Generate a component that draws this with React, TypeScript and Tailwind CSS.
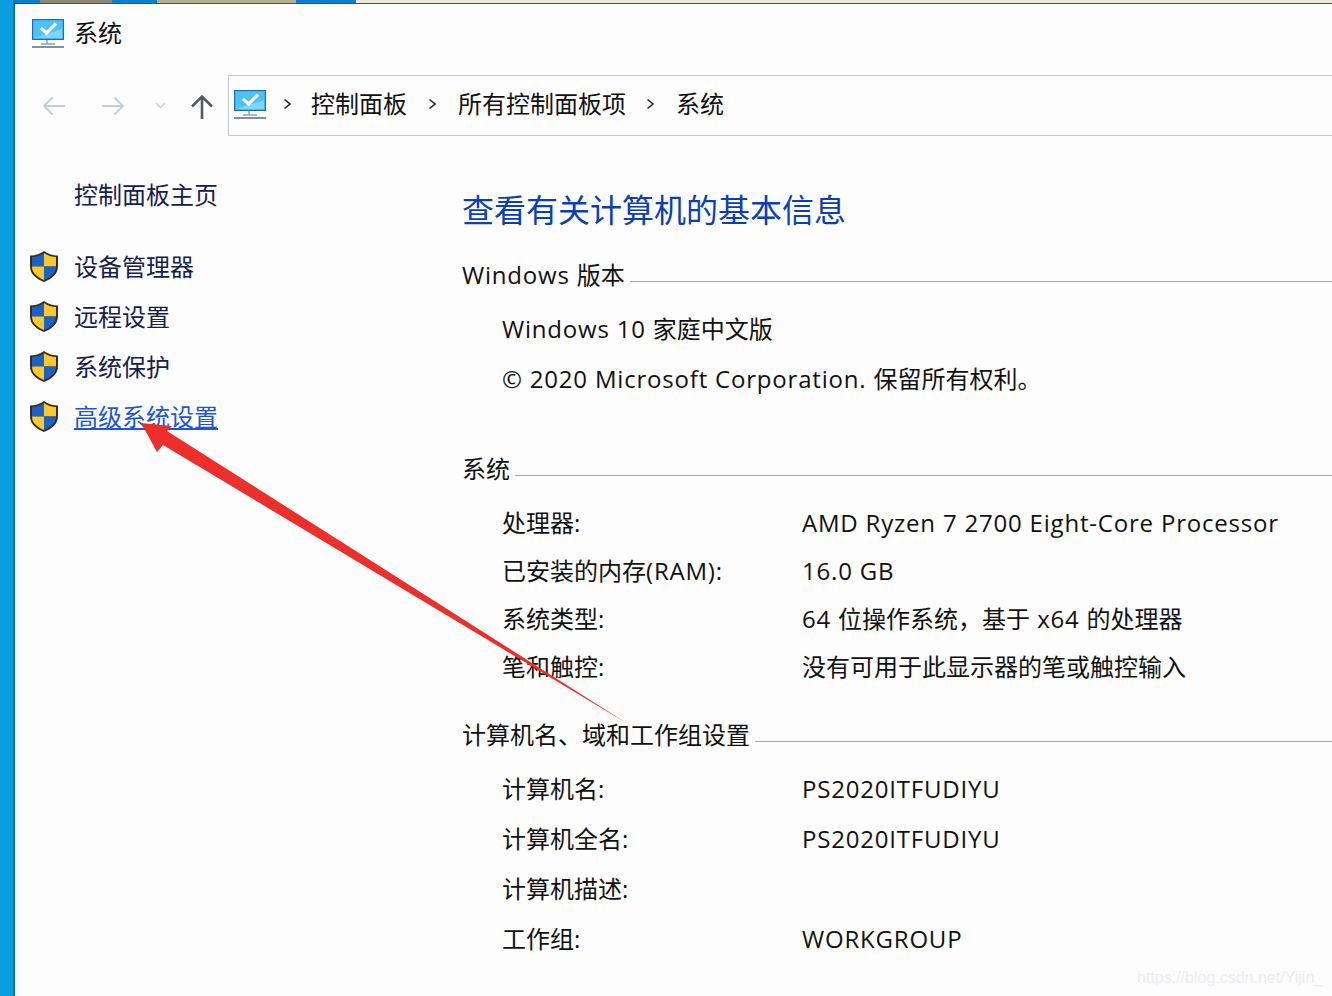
import React from "react";

const fontStack = "font-['Open_Sans','Noto_Sans_CJK_SC',sans-serif]";

function MonitorIcon({ className }: { className?: string }) {
  return (
    <svg viewBox="0 0 32 29" className={className}>
      <rect x="0.5" y="0.5" width="31" height="20" fill="#3fb4f5" stroke="#1f6fae" />
      <rect x="2" y="2" width="28" height="17" fill="#4cc1fa" />
      <path d="M2 19 L30 19 L30 10 Z" fill="#7fd6fc" />
      <path d="M9 9 L14.5 14 L24 4.5" fill="none" stroke="#ffffff" strokeWidth="3.2" />
      <path d="M15 21 V24.5 M9 25 H23" stroke="#8fa3b3" strokeWidth="1.5" fill="none" />
      <path d="M0 28 H32" stroke="#5a6a78" strokeWidth="1.5" fill="none" />
    </svg>
  );
}

function ShieldIcon() {
  return (
    <svg viewBox="0 0 28 31" className="w-[28px] h-[31px] shrink-0 -mt-[2px]">
      <path d="M14 0 C10 3 4.5 4.5 0 4.5 V15 C0 23.5 6.5 28 14 31 C21.5 28 28 23.5 28 15 V4.5 C23.5 4.5 18 3 14 0 Z" fill="#3a2a1c" />
      <path d="M14 2 C10.5 4.5 6 6 2 6 V15.5 H14 Z" fill="#1b62c8" />
      <path d="M14 2 C17.5 4.5 22 6 26 6 V15.5 H14 Z" fill="#fbc92c" />
      <path d="M2 15.5 H14 V29 C7.5 26.2 2 22.5 2 15.5 Z" fill="#fbc92c" />
      <path d="M26 15.5 H14 V29 C20.5 26.2 26 22.5 26 15.5 Z" fill="#1b62c8" />
    </svg>
  );
}

function Chevron() {
  return (
    <svg viewBox="0 0 9 12" className="w-[9px] h-[12px] shrink-0">
      <path d="M1.5 1.5 L7 6 L1.5 10.5" fill="none" stroke="#222222" strokeWidth="1.6" />
    </svg>
  );
}

function Arrow({ flip }: { flip?: boolean }) {
  return (
    <svg viewBox="0 0 24 20" className={`w-[24px] h-[20px] shrink-0 ${flip ? "-scale-x-100" : ""}`}>
      <path d="M23 10 H2 M10.5 1.5 L2 10 L10.5 18.5" fill="none" stroke="#c5ccd5" strokeWidth="1.8" />
    </svg>
  );
}

// latin runs sit wider in the reference than Open Sans sets them
function Spaced({ text }: { text: string }) {
  const parts = text.split(/([A-Za-z0-9©.()\- ]+)/).filter(Boolean);
  return (
    <>
      {parts.map((part, i) =>
        /^[A-Za-z0-9©.()\- ]+$/.test(part) ? (
          <span key={i} className="tracking-[0.8px]">
            {part}
          </span>
        ) : (
          <span key={i}>{part}</span>
        ),
      )}
    </>
  );
}

function SectionTitle({ text, mt }: { text: string; mt: string }) {
  return (
    <div className={`flex items-center gap-[5px] h-[32px] ${mt}`}>
      <span className="text-[24px] leading-[32px] text-[#111111] whitespace-nowrap">
        <Spaced text={text} />
      </span>
      <div className="flex-1 h-px bg-[#a3a5a8] mt-[12px]" />
    </div>
  );
}

function InfoRow({ label, value, height }: { label: string; value?: string; height: string }) {
  return (
    <div className={`flex items-center pl-[40px] text-[24px] text-[#111111] whitespace-nowrap ${height}`}>
      <span className="w-[300px] shrink-0">
        <Spaced text={label} />
      </span>
      <span>
        <Spaced text={value ?? ""} />
      </span>
    </div>
  );
}

const links = [
  { text: "设备管理器" },
  { text: "远程设置" },
  { text: "系统保护" },
  { text: "高级系统设置", active: true },
];

const systemRows = [
  { label: "处理器:", value: "AMD Ryzen 7 2700 Eight-Core Processor" },
  { label: "已安装的内存(RAM):", value: "16.0 GB" },
  { label: "系统类型:", value: "64 位操作系统，基于 x64 的处理器" },
  { label: "笔和触控:", value: "没有可用于此显示器的笔或触控输入" },
];

const computerRows = [
  { label: "计算机名:", value: "PS2020ITFUDIYU" },
  { label: "计算机全名:", value: "PS2020ITFUDIYU" },
  { label: "计算机描述:", value: "" },
  { label: "工作组:", value: "WORKGROUP" },
];

export default function App() {
  return (
    <div className={`relative flex w-[1332px] h-[996px] overflow-hidden bg-[#fdfdfe] ${fontStack}`}>
      {/* desktop edge */}
      <div className="w-[15px] shrink-0 bg-[#0a9de0] border-r-2 border-[#0b6c92]" />

      <div className="flex-1 flex flex-col min-w-0">
        {/* bit of the window behind */}
        <div className="flex h-[4px] shrink-0 border-b border-[#4a4f55]">
          <div className="w-[25px] bg-[#0a7fcc]" />
          <div className="w-[72px] bg-[#8f8a78]" />
          <div className="w-[45px] bg-[#0a7fcc]" />
          <div className="w-[139px] bg-[#b5ae90]" />
          <div className="w-[60px] bg-[#0a7fcc]" />
          <div className="flex-1 bg-[#eeeadb]" />
        </div>

        {/* title */}
        <div className="flex items-center h-[61px] shrink-0 pl-[17px] pb-[3px]">
          <MonitorIcon className="w-[32px] h-[29px]" />
          <span className="ml-[10px] text-[24px] text-[#111111]">系统</span>
        </div>

        {/* nav */}
        <div className="flex mt-[10px] h-[61px] shrink-0">
          <div className="flex items-center w-[213px] shrink-0">
            <div className="ml-[27px]">
              <Arrow />
            </div>
            <div className="ml-[35px]">
              <Arrow flip />
            </div>
            <svg viewBox="0 0 11 7" className="ml-[30px] w-[11px] h-[7px] shrink-0">
              <path d="M1 1 L5.5 5.5 L10 1" fill="none" stroke="#c5ccd5" strokeWidth="1.3" />
            </svg>
            <svg viewBox="0 0 24 26" className="ml-[24px] mt-[2px] w-[24px] h-[26px] shrink-0">
              <path d="M12 25 V3 M2 12.5 L12 2.5 L22 12.5" fill="none" stroke="#555a60" strokeWidth="2.6" />
            </svg>
          </div>
          <div className="flex-1 flex items-center border border-r-0 border-[#c4c6c9] pl-[5px] pb-[3px] text-[24px] text-[#111111] whitespace-nowrap">
            <MonitorIcon className="w-[32px] h-[29px] shrink-0" />
            <div className="ml-[17px]">
              <Chevron />
            </div>
            <span className="ml-[19px]">控制面板</span>
            <div className="ml-[21px]">
              <Chevron />
            </div>
            <span className="ml-[21px]">所有控制面板项</span>
            <div className="ml-[20px]">
              <Chevron />
            </div>
            <span className="ml-[21px]">系统</span>
          </div>
        </div>

        <div className="flex flex-1 min-h-0">
          {/* sidebar */}
          <div className="w-[447px] shrink-0 pl-[15px]">
            <div className="mt-[43px] h-[32px] pl-[44px] text-[24px] leading-[32px] text-[#14204f]">控制面板主页</div>
            <div className="mt-[31px] flex flex-col">
              {links.map((link) => (
                <div key={link.text} className="flex items-center h-[50px]">
                  <ShieldIcon />
                  <span
                    className={`ml-[16px] text-[24px] leading-[32px] ${
                      link.active ? "text-[#1a56d6] underline underline-offset-2" : "text-[#14204f]"
                    }`}
                  >
                    {link.text}
                  </span>
                </div>
              ))}
            </div>
          </div>

          {/* main */}
          <div className="flex-1 min-w-0">
            <h1 className="mt-[50px] h-[48px] text-[32px] leading-[48px] text-[#0b3fb5]">查看有关计算机的基本信息</h1>

            <SectionTitle text="Windows 版本" mt="mt-[25px]" />
            <div className="mt-[13px]">
              <InfoRow label="Windows 10 家庭中文版" height="h-[50px]" />
              <InfoRow label="© 2020 Microsoft Corporation. 保留所有权利。" height="h-[50px]" />
            </div>

            <SectionTitle text="系统" mt="mt-[49px]" />
            <div className="mt-[14px]">
              {systemRows.map((row) => (
                <InfoRow key={row.label} label={row.label} value={row.value} height="h-[48px]" />
              ))}
            </div>

            <SectionTitle text="计算机名、域和工作组设置" mt="mt-[28px]" />
            <div className="mt-[13px]">
              {computerRows.map((row) => (
                <InfoRow key={row.label} label={row.label} value={row.value} height="h-[50px]" />
              ))}
            </div>
          </div>
        </div>
      </div>

      {/* red annotation arrow */}
      <svg viewBox="0 0 1332 996" className="absolute inset-0 w-[1332px] h-[996px] pointer-events-none">
        <path d="M141 423 L172 426 L167 431 L628 724 L163 445 L157 452 Z" fill="#ec2f2b" />
      </svg>

      <span className="absolute left-[1137px] top-[966px] font-['Liberation_Sans',sans-serif] text-[16px] leading-[24px] text-[#ececee] whitespace-nowrap">
        https://blog.csdn.net/Yijin_
      </span>
    </div>
  );
}
